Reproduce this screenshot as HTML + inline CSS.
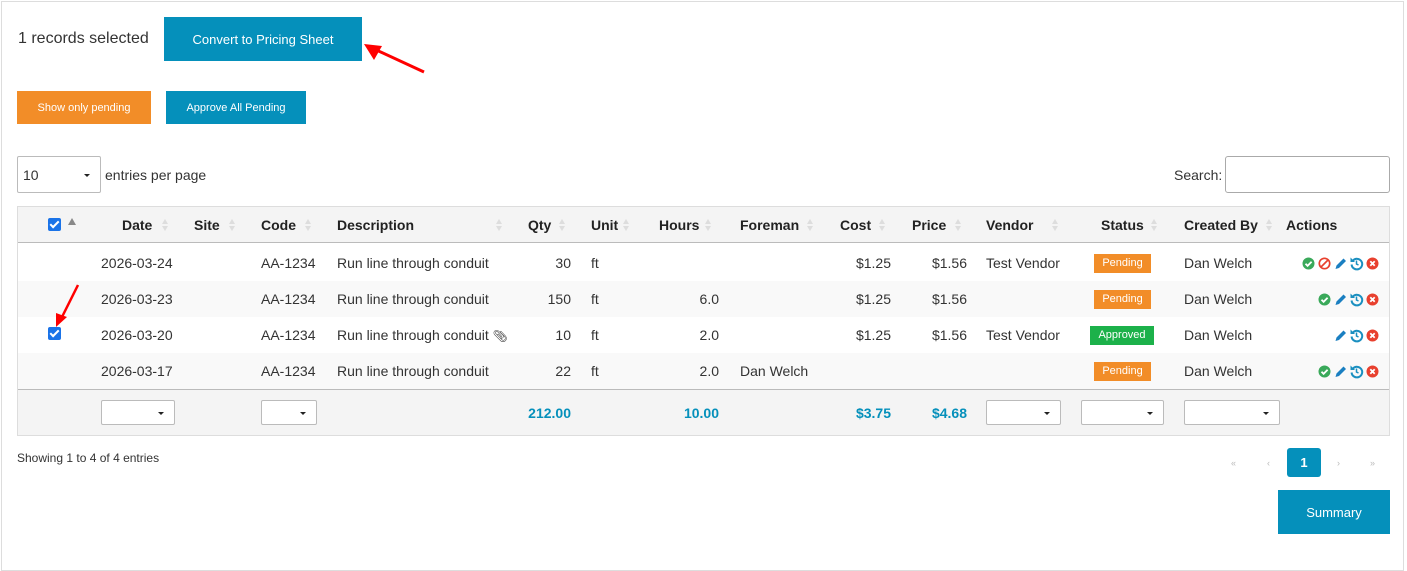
<!DOCTYPE html>
<html><head><meta charset="utf-8"><style>
*{margin:0;padding:0;box-sizing:border-box}
body{width:1407px;height:565px;background:#fff;font-family:"Liberation Sans",Arial,sans-serif;color:#333;position:relative;overflow:hidden;font-size:14px}
.a{position:absolute;white-space:nowrap;line-height:16px}
.r{text-align:right}
.btn{position:absolute;color:#fff;display:flex;align-items:center;justify-content:center;font-size:12px}
.blue{background:#0590bb}
.org{background:#f28d28}
.box{position:absolute;border:1px solid #bbb;background:#fff;border-radius:2px}
.sel{position:absolute;border:1px solid #bbb;background:#fff;border-radius:2px}
.sel:after{content:"";position:absolute;right:10px;top:50%;margin-top:-1px;border:3px solid transparent;border-top:3px solid #222;border-bottom:0}
.sort{position:absolute;width:8px;height:16px}
.sort:before{content:"";position:absolute;left:0;top:2px;border:3.5px solid transparent;border-bottom:5px solid #ddd;border-top:0}
.sort:after{content:"";position:absolute;left:0;top:9px;border:3.5px solid transparent;border-top:5px solid #ddd;border-bottom:0}
.hd{font-weight:bold;color:#222}
.badge{position:absolute;color:#fff;font-size:11px;height:19px;line-height:19px;text-align:center}
.cb{position:absolute;width:13px;height:13px;background:#1a73e8;border-radius:2px}
.cb:after{content:"";position:absolute;left:4px;top:1px;width:3px;height:7px;border:solid #fff;border-width:0 2px 2px 0;transform:rotate(45deg)}
.tot{color:#0590bb;font-weight:bold}
</style></head><body>
<div style="position:absolute;left:1px;top:1px;width:1403px;height:570px;border:1px solid #ddd"></div>
<div class="a" style="left:18px;top:30px;font-size:16px;line-height:18px">1 records selected</div>
<div class="btn blue" style="left:164px;top:17px;width:198px;height:44px;font-size:13px">Convert to Pricing Sheet</div>
<svg style="position:absolute;left:360px;top:40px" width="70" height="40"><line x1="64" y1="32" x2="12" y2="8" stroke="#f00" stroke-width="3"/><polygon points="4,4 22,6 14,20" fill="#f00"/></svg>
<div class="btn org" style="left:17px;top:91px;width:134px;height:33px;font-size:11px">Show only pending</div>
<div class="btn blue" style="left:166px;top:91px;width:140px;height:33px;font-size:11px">Approve All Pending</div>
<div class="sel" style="left:17px;top:156px;width:84px;height:37px"></div>
<div class="a" style="left:23px;top:167px">10</div>
<div class="a" style="left:105px;top:167px">entries per page</div>
<div class="a" style="left:1174px;top:167px">Search:</div>
<div class="box" style="left:1225px;top:156px;width:165px;height:37px;border-radius:3px;border-color:#aaa"></div>
<!-- table -->
<div style="position:absolute;left:17px;top:206px;width:1373px;height:230px;border:1px solid #ddd"></div>
<div style="position:absolute;left:18px;top:207px;width:1371px;height:36px;background:#f4f4f4;border-bottom:1px solid #bbb"></div>
<div style="position:absolute;left:18px;top:281px;width:1371px;height:36px;background:#f9f9f9"></div>
<div style="position:absolute;left:18px;top:353px;width:1371px;height:36px;background:#f9f9f9"></div>
<div style="position:absolute;left:18px;top:389px;width:1371px;height:46px;background:#f4f4f4;border-top:1px solid #bbb"></div>
<div class="cb" style="left:48px;top:218px"></div>
<div style="position:absolute;left:68px;top:218px;border:4px solid transparent;border-bottom:7px solid #888;border-top:0"></div>
<div class="a hd" style="left:122px;top:217px">Date</div><div class="sort" style="left:162px;top:217px"></div>
<div class="a hd" style="left:194px;top:217px">Site</div><div class="sort" style="left:229px;top:217px"></div>
<div class="a hd" style="left:261px;top:217px">Code</div><div class="sort" style="left:305px;top:217px"></div>
<div class="a hd" style="left:337px;top:217px">Description</div><div class="sort" style="left:496px;top:217px"></div>
<div class="a hd" style="left:528px;top:217px">Qty</div><div class="sort" style="left:559px;top:217px"></div>
<div class="a hd" style="left:591px;top:217px">Unit</div><div class="sort" style="left:623px;top:217px"></div>
<div class="a hd" style="left:659px;top:217px">Hours</div><div class="sort" style="left:705px;top:217px"></div>
<div class="a hd" style="left:740px;top:217px">Foreman</div><div class="sort" style="left:807px;top:217px"></div>
<div class="a hd" style="left:840px;top:217px">Cost</div><div class="sort" style="left:879px;top:217px"></div>
<div class="a hd" style="left:912px;top:217px">Price</div><div class="sort" style="left:955px;top:217px"></div>
<div class="a hd" style="left:986px;top:217px">Vendor</div><div class="sort" style="left:1052px;top:217px"></div>
<div class="a hd" style="left:1101px;top:217px">Status</div><div class="sort" style="left:1151px;top:217px"></div>
<div class="a hd" style="left:1184px;top:217px">Created By</div><div class="sort" style="left:1266px;top:217px"></div>
<div class="a hd" style="left:1286px;top:217px">Actions</div>

<!-- rows -->
<div class="a" style="left:101px;top:255px">2026-03-24</div><div class="a" style="left:261px;top:255px">AA-1234</div><div class="a" style="left:337px;top:255px">Run line through conduit</div><div class="a r" style="left:531px;width:40px;top:255px">30</div><div class="a" style="left:591px;top:255px">ft</div><div class="a r" style="left:851px;width:40px;top:255px">$1.25</div><div class="a r" style="left:927px;width:40px;top:255px">$1.56</div><div class="a" style="left:986px;top:255px">Test Vendor</div><div class="badge org" style="left:1094px;top:254px;width:57px">Pending</div><div class="a" style="left:1184px;top:255px">Dan Welch</div>

<div class="a" style="left:101px;top:291px">2026-03-23</div><div class="a" style="left:261px;top:291px">AA-1234</div><div class="a" style="left:337px;top:291px">Run line through conduit</div><div class="a r" style="left:531px;width:40px;top:291px">150</div><div class="a" style="left:591px;top:291px">ft</div><div class="a r" style="left:679px;width:40px;top:291px">6.0</div><div class="a r" style="left:851px;width:40px;top:291px">$1.25</div><div class="a r" style="left:927px;width:40px;top:291px">$1.56</div><div class="badge org" style="left:1094px;top:290px;width:57px">Pending</div><div class="a" style="left:1184px;top:291px">Dan Welch</div>

<div class="cb" style="left:48px;top:327px"></div>
<svg style="position:absolute;left:52px;top:283px" width="30" height="46"><line x1="26" y1="2" x2="10" y2="34" stroke="#f00" stroke-width="2.5"/><polygon points="4,44 4,30 15,34" fill="#f00"/></svg>
<div class="a" style="left:101px;top:327px">2026-03-20</div><div class="a" style="left:261px;top:327px">AA-1234</div><div class="a" style="left:337px;top:327px">Run line through conduit <span style="font-size:12px">📎︎</span></div><div class="a r" style="left:531px;width:40px;top:327px">10</div><div class="a" style="left:591px;top:327px">ft</div><div class="a r" style="left:679px;width:40px;top:327px">2.0</div><div class="a r" style="left:851px;width:40px;top:327px">$1.25</div><div class="a r" style="left:927px;width:40px;top:327px">$1.56</div><div class="a" style="left:986px;top:327px">Test Vendor</div><div class="badge" style="background:#1cb14a;left:1090px;top:326px;width:64px">Approved</div><div class="a" style="left:1184px;top:327px">Dan Welch</div>

<div class="a" style="left:101px;top:363px">2026-03-17</div><div class="a" style="left:261px;top:363px">AA-1234</div><div class="a" style="left:337px;top:363px">Run line through conduit</div><div class="a r" style="left:531px;width:40px;top:363px">22</div><div class="a" style="left:591px;top:363px">ft</div><div class="a r" style="left:679px;width:40px;top:363px">2.0</div><div class="a" style="left:740px;top:363px">Dan Welch</div><div class="badge org" style="left:1094px;top:362px;width:57px">Pending</div><div class="a" style="left:1184px;top:363px">Dan Welch</div>

<!-- action icons -->
<svg width="0" height="0" style="position:absolute"><defs>
<g id="ok"><circle cx="6.5" cy="6.5" r="6" fill="#3aa95a"/><path d="M3.5 6.7l2.1 2.1 4-4" stroke="#fff" stroke-width="1.8" fill="none"/></g>
<g id="no"><circle cx="6.5" cy="6.5" r="5.2" fill="none" stroke="#e8402e" stroke-width="1.7"/><line x1="3" y1="10" x2="10" y2="3" stroke="#e8402e" stroke-width="1.7"/></g>
<g id="ed"><path d="M1.5 12l1-3.5 7-7 2.5 2.5-7 7z" fill="#1a7fc1"/></g>
<g id="hi"><path d="M3 3.5A5.3 5.3 0 1 1 1.6 7.5" stroke="#1a8fc0" stroke-width="2" fill="none"/><path d="M0.5 0.5l4.5 4.5H0.5z" fill="#1a8fc0"/><path d="M6.5 3.5V7L8.5 8" stroke="#1a8fc0" stroke-width="1.5" fill="none"/></g>
<g id="de"><circle cx="6.5" cy="6.5" r="6" fill="#e8402e"/><path d="M4.3 4.3l4.4 4.4M8.7 4.3l-4.4 4.4" stroke="#fff" stroke-width="1.8"/></g>
</defs></svg>
<svg style="position:absolute;left:1302px;top:257px" width="80" height="14"><use href="#ok" x="0"/><use href="#no" x="16"/><use href="#ed" x="32"/><use href="#hi" x="48"/><use href="#de" x="64"/></svg>
<svg style="position:absolute;left:1318px;top:293px" width="64" height="14"><use href="#ok" x="0"/><use href="#ed" x="16"/><use href="#hi" x="32"/><use href="#de" x="48"/></svg>
<svg style="position:absolute;left:1334px;top:329px" width="48" height="14"><use href="#ed" x="0"/><use href="#hi" x="16"/><use href="#de" x="32"/></svg>
<svg style="position:absolute;left:1318px;top:365px" width="64" height="14"><use href="#ok" x="0"/><use href="#ed" x="16"/><use href="#hi" x="32"/><use href="#de" x="48"/></svg>

<!-- footer -->
<div class="sel" style="left:101px;top:400px;width:74px;height:25px"></div>
<div class="sel" style="left:261px;top:400px;width:56px;height:25px"></div>
<div class="a r tot" style="left:511px;width:60px;top:405px">212.00</div>
<div class="a r tot" style="left:659px;width:60px;top:405px">10.00</div>
<div class="a r tot" style="left:831px;width:60px;top:405px">$3.75</div>
<div class="a r tot" style="left:907px;width:60px;top:405px">$4.68</div>
<div class="sel" style="left:986px;top:400px;width:75px;height:25px"></div>
<div class="sel" style="left:1081px;top:400px;width:83px;height:25px"></div>
<div class="sel" style="left:1184px;top:400px;width:96px;height:25px"></div>

<div class="a" style="left:17px;top:450px;font-size:12px">Showing 1 to 4 of 4 entries</div>
<div class="a" style="left:1231px;top:455px;font-size:9px;color:#bbb">«</div>
<div class="a" style="left:1267px;top:455px;font-size:9px;color:#bbb">‹</div>
<div style="position:absolute;left:1287px;top:448px;width:34px;height:29px;background:#0590bb;border-radius:3px;color:#fff;font-weight:bold;font-size:13px;display:flex;align-items:center;justify-content:center">1</div>
<div class="a" style="left:1337px;top:455px;font-size:9px;color:#bbb">›</div>
<div class="a" style="left:1370px;top:455px;font-size:9px;color:#bbb">»</div>
<div class="btn blue" style="left:1278px;top:490px;width:112px;height:44px;font-size:13px">Summary</div>
</body></html>
